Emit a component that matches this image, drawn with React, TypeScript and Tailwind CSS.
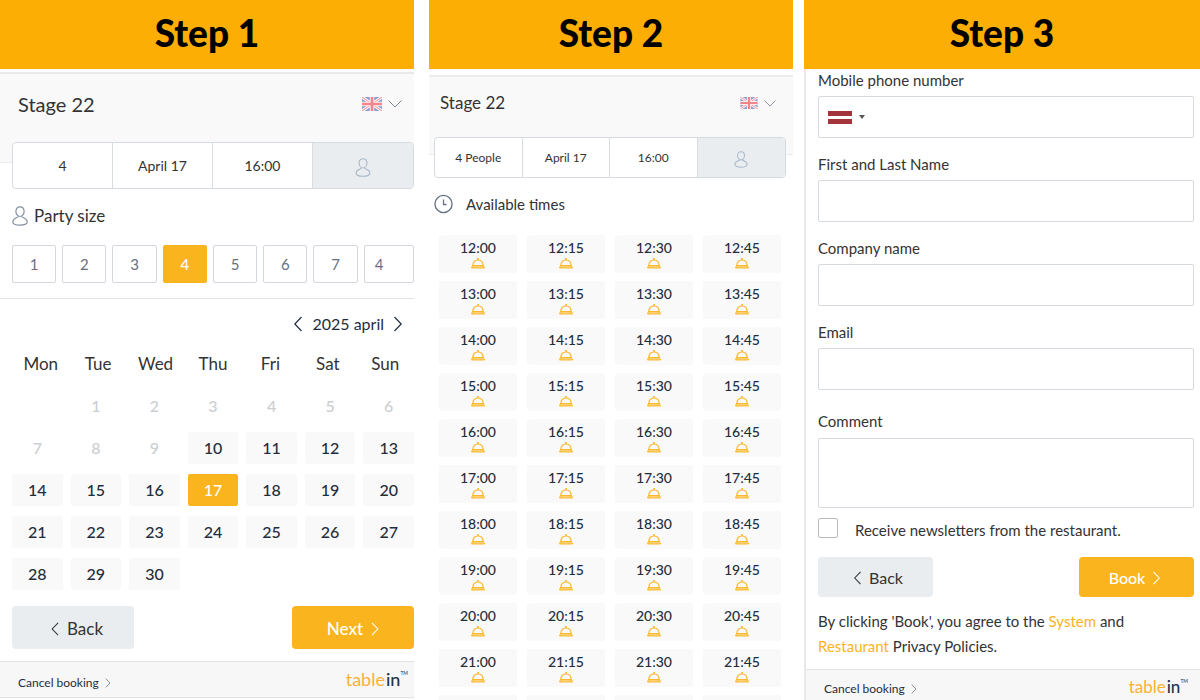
import type { ReactNode } from "react";

const weekdays = ["Mon", "Tue", "Wed", "Thu", "Fri", "Sat", "Sun"];
const days = Array.from({ length: 30 }, (_, i) => i + 1);
const hours = [12, 13, 14, 15, 16, 17, 18, 19, 20, 21, 22];
const times = hours.flatMap((hour) => ["00", "15", "30", "45"].map((minutes) => `${hour}:${minutes}`));

function ChevronLeft({ className }: { className: string }) {
    return (
        <svg viewBox="0 0 8 16" className={className} fill="none" stroke="currentColor" strokeWidth="1.2" aria-hidden="true">
            <path d="M7.5 1 0.8 8l6.7 7" />
        </svg>
    );
}

function ChevronRight({ className }: { className: string }) {
    return (
        <svg viewBox="0 0 8 16" className={className} fill="none" stroke="currentColor" strokeWidth="1.2" aria-hidden="true">
            <path d="M0.5 1 7.2 8 0.5 15" />
        </svg>
    );
}

function PersonIcon({ className }: { className: string }) {
    return (
        <svg viewBox="0 0 16 20" className={className} fill="none" stroke="currentColor" strokeWidth="1.2" aria-hidden="true">
            <path d="M8 .8c2.5 0 4.1 1.9 4.1 4.6S10.3 10.5 8 10.5 3.9 8.1 3.9 5.400 5.500.8 8 .8Z" />
            <path d="M6.300 10.200C6.300 12 .8 11.700.8 15.700c0 2.400 3 3.500 7.200 3.500s7.200-1.100 7.200-3.500c0-4-5.500-3.700-5.500-5.500" />
        </svg>
    );
}

function ClocheIcon() {
    return (
        <svg viewBox="0 0 14 11" className="w-3.5 h-[11px] text-[#fab41e]" fill="none" stroke="currentColor" aria-hidden="true">
            <path d="M1.800 7.500C2 4 4.200 2 7 2s5 2 5.200 5.500" strokeWidth="1.200" />
            <path d="M6 1h2" strokeWidth="1.600" />
            <path d="M1.500 7.500h11l1 2.500H.5Z" fill="#fab41e" fillOpacity=".6" strokeWidth=".9" />
        </svg>
    );
}

function UkFlag({ className }: { className: string }) {
    return (
        <svg viewBox="0 0 20 14" className={className} aria-hidden="true">
            <path fill="#8d9dce" d="M0 0h20v14H0z" />
            <path d="m0 0 20 14M20 0 0 14" stroke="#fff" strokeWidth="3" />
            <path d="m0 0 20 14M20 0 0 14" stroke="#f4a6ab" strokeWidth="1.200" />
            <path d="M10 0v14M0 7h20" stroke="#fdeeee" strokeWidth="4.600" />
            <path d="M10 0v14M0 7h20" stroke="#f3858c" strokeWidth="2.600" />
        </svg>
    );
}

function StepTitle({ children }: { children: ReactNode }) {
    return (
        <h2 className="h-[69px] shrink-0 flex items-center justify-center bg-[#fdae05] pb-1 text-black text-[37px] font-black">
            {children}
        </h2>
    );
}

function Footer({ className, logoClassName }: { className: string; logoClassName: string }) {
    return (
        <footer className={`flex justify-between border-t border-[#dfe1e3] bg-[#f7f7f7] ${className}`}>
            <a href="#cancel" className="flex items-center gap-1.5 text-xs text-[#1f2d3d]">
                Cancel booking
                <ChevronRight className="w-1.5 h-2.5 text-[#5d6875]" />
            </a>
            <a href="#tablein" className={`flex leading-5 text-[#f9b233] ${logoClassName}`}>
                table<span className="ml-px font-medium text-[#25334a]">in</span>
                <sup className="top-0 pt-px text-[5px] leading-[6px] text-[#25334a]">TM</sup>
            </a>
        </footer>
    );
}

function StepOne() {
    return (
        <section className="grow-[414] basis-0 min-w-0 flex flex-col">
            <StepTitle>Step 1</StepTitle>
            <div className="mt-[3px] h-[91px] shrink-0 flex items-start justify-between border-t-2 border-b border-t-[#e9e9e9] border-b-[#ececec] bg-[#f9f9f9] pl-[18px] pr-3 pt-4">
                <h3 className="text-xl leading-7">Stage 22</h3>
                <button type="button" aria-label="Language" className="h-7 flex items-center gap-1.5">
                    <UkFlag className="w-5 h-3.5" />
                    <svg viewBox="0 0 14 8" className="w-3.5 h-2" fill="none" stroke="#7b8490" aria-hidden="true">
                        <path d="m.5.5 6.500 6.500L13.500.5" />
                    </svg>
                </button>
            </div>

            {/* Booking summary */}
            <div className="relative -mt-[21px] ml-3 h-[47px] shrink-0 grid grid-cols-4 divide-x divide-[#d8dde2] overflow-hidden rounded border border-[#d5dbe0] bg-white text-sm">
                <button type="button">4</button>
                <button type="button">April 17</button>
                <button type="button">16:00</button>
                <button type="button" aria-label="Guest" className="flex items-center justify-center bg-[#e9edf0] pt-1">
                    <PersonIcon className="w-4 h-[19px] text-[#a9b8ca]" />
                </button>
            </div>

            <h4 className="ml-3 mt-[15px] flex items-center gap-1.5 text-[17px] leading-6">
                <PersonIcon className="w-4 h-5 text-[#8390a1]" />
                Party size
            </h4>
            <div className="mt-[17px] ml-3 grid grid-cols-[repeat(7,44fr)_50fr] gap-1.5">
                {[1, 2, 3, 4, 5, 6, 7].map((size) => (
                    <button
                        key={size}
                        type="button"
                        className={`h-[38px] rounded-xs border text-[15px] ${size === 4
                            ? "border-[#fab41e] bg-[#fab41e] text-white font-medium"
                            : "border-[#d3d8df] text-[#667080]"
                            }`}
                    >
                        {size}
                    </button>
                ))}
                <input
                    type="text"
                    defaultValue="4"
                    aria-label="Other party size"
                    className="h-[38px] w-full min-w-0 rounded-xs border border-[#d3d8df] pl-2.5 text-[15px] text-[#667080]"
                />
            </div>

            <div className="mt-[15px] flex items-center justify-end gap-2.5 border-t border-[#e4e4e4] pt-[13px] pr-3 text-base leading-6 text-[#1f2d3d]">
                <button type="button" aria-label="Previous month">
                    <ChevronLeft className="w-2 h-4" />
                </button>
                <span>2025 april</span>
                <button type="button" aria-label="Next month">
                    <ChevronRight className="w-2 h-4" />
                </button>
            </div>

            <div className="mt-4 ml-3 grid grid-cols-7 text-center text-[17px] leading-6">
                {weekdays.map((weekday) => (
                    <span key={weekday}>{weekday}</span>
                ))}
            </div>
            <div className="mt-3.5 ml-3 grid grid-cols-7 gap-x-2 gap-y-2.5 text-base font-medium">
                {days.map((day) => (
                    <button
                        key={day}
                        type="button"
                        disabled={day < 10}
                        className={`h-8 rounded-xs ${day === 1 ? "col-start-2" : ""} ${day < 10
                            ? "text-[#ccced0]"
                            : day === 17
                                ? "bg-[#fab41e] text-white"
                                : "bg-[#f9f9f9] text-[#1f2d3d]"
                            }`}
                    >
                        {day}
                    </button>
                ))}
            </div>

            <div className="mt-4 ml-3 flex justify-between text-[17px]">
                <button type="button" className="h-[43px] w-[122px] flex items-center justify-center gap-2 rounded-sm bg-[#e9edf0] pl-2 pt-0.5">
                    <ChevronLeft className="w-2 h-3.5" />
                    Back
                </button>
                <button type="button" className="h-[43px] w-[122px] flex items-center justify-center gap-2 rounded-sm bg-[#fab41e] pt-0.5 font-medium text-white">
                    Next
                    <ChevronRight className="w-2 h-3.5" />
                </button>
            </div>
            <Footer className="mt-3 border-b h-[37px] pl-[18px] pr-1.5 pt-[7px]" logoClassName="text-lg" />
        </section>
    );
}

function StepTwo() {
    return (
        <section className="ml-[15px] grow-[364] basis-0 min-w-0 flex flex-col">
            <StepTitle>Step 2</StepTitle>
            <div className="mt-1.5 h-20 shrink-0 flex items-start justify-between border-t-2 border-b border-t-[#ededed] border-b-[#ececec] bg-[#f9f9f9] pl-[11px] pr-[17px] pt-3">
                <h3 className="text-[17px] leading-7">Stage 22</h3>
                <button type="button" aria-label="Language" className="h-7 flex items-center gap-1.5">
                    <UkFlag className="w-[18px] h-3" />
                    <svg viewBox="0 0 14 8" className="w-3 h-[7px]" fill="none" stroke="#7b8490" aria-hidden="true">
                        <path d="m.5.5 6.500 6.500L13.500.5" />
                    </svg>
                </button>
            </div>

            <div className="relative -mt-[18px] ml-[5px] mr-[7px] h-[41px] shrink-0 grid grid-cols-4 divide-x divide-[#d8dde2] overflow-hidden rounded border border-[#d5dbe0] bg-white text-xs">
                <button type="button">4 People</button>
                <button type="button">April 17</button>
                <button type="button">16:00</button>
                <button type="button" aria-label="Guest" className="flex items-center justify-center bg-[#e9edf0] pt-1">
                    <PersonIcon className="w-3.5 h-[17px] text-[#a9b8ca]" />
                </button>
            </div>

            <h4 className="mt-3.5 ml-[5px] flex items-center gap-3 text-[15px] leading-6">
                <svg viewBox="0 0 20 20" className="w-5 h-5" fill="none" stroke="#667080" aria-hidden="true">
                    <circle cx="9.500" cy="10" r="8.600" strokeWidth="1.300" />
                    <path d="M9.500 5.500V10.500h3" strokeWidth="1.300" />
                </svg>
                Available times
            </h4>
            <div className="mt-[19px] ml-2.5 mr-3 grid grid-cols-4 gap-x-2.5 gap-y-2 text-sm leading-5 font-medium">
                {times.map((time) => (
                    <button
                        key={time}
                        type="button"
                        className="h-[38px] flex flex-col items-center rounded-xs bg-[#f9f9f9] pt-[3px] text-[#1f2d3d]"
                    >
                        {time}
                        <ClocheIcon />
                    </button>
                ))}
            </div>
        </section>
    );
}

function TextField({ id, label, type = "text" }: { id: string; label: string; type?: string }) {
    return (
        <div>
            <label htmlFor={id} className="block">{label}</label>
            <input id={id} type={type} className="mt-1 block h-[42px] w-full rounded-xs border border-[#d5dbe0] px-3" />
        </div>
    );
}

function StepThree() {
    return (
        <section className="ml-[11px] grow-[396] basis-0 min-w-0 flex flex-col">
            <StepTitle>Step 3</StepTitle>
            <div className="grow flex flex-col border-l-2 border-[#e9e9e9]">
                <form className="ml-3 mr-1.5 text-[15px]">
                    <div className="flex flex-col gap-[15px] leading-[23px]">
                        <div>
                            <label htmlFor="phone" className="block">Mobile phone number</label>
                            <div className="mt-1 flex h-[42px] items-center rounded-xs border border-[#d5dbe0] pl-[9px]">
                                <button type="button" aria-label="Country code" className="flex items-center gap-[7px]">
                                    <svg viewBox="0 0 24 13" className="w-6 h-[13px]" aria-hidden="true">
                                        <path fill="#a4343c" d="M0 0h24v13H0z" />
                                        <path fill="#fff" d="M0 5h24v3H0z" />
                                    </svg>
                                    <svg viewBox="0 0 6 4" className="w-1.5 h-1" fill="#555" aria-hidden="true">
                                        <path d="M0 0h6L3 4Z" />
                                    </svg>
                                </button>
                                <input id="phone" type="tel" className="ml-2 h-full min-w-0 grow" />
                            </div>
                        </div>
                        <TextField id="name" label="First and Last Name" />
                        <TextField id="company" label="Company name" />
                        <TextField id="email" label="Email" type="email" />
                    </div>

                    <label htmlFor="comment" className="mt-5 block leading-[23px]">Comment</label>
                    <textarea id="comment" className="mt-[5px] block h-[70px] w-full resize-none rounded-xs border border-[#d5dbe0] px-3 py-2" />

                    <label className="mt-2.5 flex gap-[17px] leading-6">
                        <input type="checkbox" className="h-5 w-5 appearance-none rounded-xs border border-[#b8bcc0]" />
                        Receive newsletters from the restaurant.
                    </label>

                    <div className="mt-[15px] flex justify-between text-base">
                        <button type="button" className="h-10 w-[115px] flex items-center justify-center gap-2 rounded-sm bg-[#e9edf0] pl-1.5 pt-0.5">
                            <ChevronLeft className="w-[7px] h-3.5" />
                            Back
                        </button>
                        <button type="submit" className="h-10 w-[115px] flex items-center justify-center gap-2 rounded-sm bg-[#fab41e] pr-1 pt-0.5 font-medium text-white">
                            Book
                            <ChevronRight className="w-[7px] h-3.5" />
                        </button>
                    </div>
                    <p className="mt-3 leading-[25px]">
                        By clicking 'Book', you agree to the{" "}
                        <a href="#system" className="text-[#fab41e]">System</a> and
                        <br />
                        <a href="#restaurant" className="text-[#fab41e]">Restaurant</a> Privacy Policies.
                    </p>
                </form>
                <Footer className="mt-2.5 grow pl-[18px] pr-3 pt-[7px]" logoClassName="text-[17px]" />
            </div>
        </section>
    );
}

export default function App() {
    return (
        <main className="h-screen overflow-hidden flex bg-white font-['Lato',sans-serif] text-[#333]">
            <StepOne />
            <StepTwo />
            <StepThree />
        </main>
    );
}
